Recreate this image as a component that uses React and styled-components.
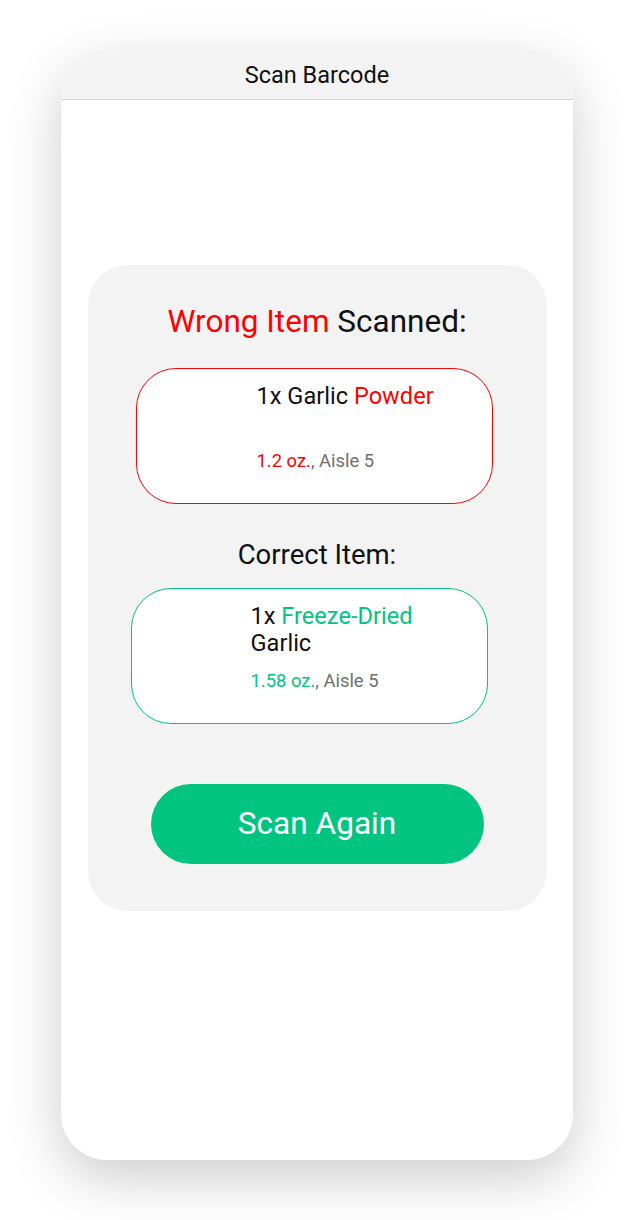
import React from "react";
import styled, { createGlobalStyle } from "styled-components";

const Global = createGlobalStyle`
  html, body { margin: 0; padding: 0; background: #ffffff; }
  body { font-family: Roboto, "Noto Sans", Arial, sans-serif; }
`;

const Page = styled.div`
  display: flex;
  justify-content: flex-start;
  padding: 50px 0 60px 61px;
`;

const Phone = styled.div`
  width: 512px;
  height: 1110px;
  background: #ffffff;
  border-radius: 46px;
  overflow: hidden;
  box-shadow: 0 18px 55px rgba(0, 0, 0, 0.2);
  display: flex;
  flex-direction: column;
  align-items: center;
`;

const Header = styled.div`
  align-self: stretch;
  height: 49px;
  background: #f3f3f3;
  border-bottom: 1px solid #d6d6d6;
  display: flex;
  align-items: center;
  justify-content: center;
  font-size: 23.5px;
  color: #111;
`;

const Panel = styled.div`
  margin-top: 165px;
  width: 459px;
  height: 646px;
  box-sizing: border-box;
  background: #f3f3f3;
  border-radius: 40px;
  display: flex;
  flex-direction: column;
  align-items: center;
  padding-top: 38px;
`;

const Heading = styled.div`
  font-size: ${(p) => p.$size}px;
  line-height: 1.2;
  color: #111;
  margin-top: ${(p) => p.$mt || 0}px;
  text-align: center;
`;

const Accent = styled.span`
  color: ${(p) => p.$color};
`;

const Card = styled.div`
  width: 357px;
  height: 136px;
  box-sizing: border-box;
  background: #fff;
  border: 1px solid ${(p) => p.$color};
  border-radius: 40px;
  margin-top: ${(p) => p.$mt}px;
  transform: translateX(${(p) => p.$shift}px);
  display: flex;
`;

const Thumb = styled.div`
  width: ${(p) => p.$w}px;
  flex-shrink: 0;
`;

const Info = styled.div`
  width: 200px;
  padding: 14px 0 32px;
  display: flex;
  flex-direction: column;
  justify-content: space-between;
`;

const Title = styled.div`
  font-size: 23.6px;
  line-height: 27px;
  color: #111;
`;

const Detail = styled.div`
  font-size: 18.4px;
  line-height: 20px;
  color: #707070;
`;

const Button = styled.button`
  margin-top: 60px;
  width: 333px;
  height: 80px;
  border: none;
  border-radius: 40px;
  background: #00c47f;
  color: #fff;
  font-family: Roboto, Arial, sans-serif;
  font-size: 31.6px;
  cursor: pointer;
`;

const RED = "#ff0000";
const GREEN = "#00c47f";

export default function App() {
  return (
    <>
      <Global />
      <Page>
        <Phone>
          <Header>Scan Barcode</Header>
          <Panel>
            <Heading $size={31.5}>
              <Accent $color={RED}>Wrong Item</Accent> Scanned:
            </Heading>
            <Card $color={RED} $mt={27} $shift={-3}>
              <Thumb $w={120} />
              <Info>
                <Title>
                  1x Garlic <Accent $color={RED}>Powder</Accent>
                </Title>
                <Detail>
                  <Accent $color={RED}>1.2 oz.</Accent>, Aisle 5
                </Detail>
              </Info>
            </Card>
            <Heading $size={27.5} $mt={34}>Correct Item:</Heading>
            <Card $color={GREEN} $mt={17} $shift={-8}>
              <Thumb $w={119} />
              <Info>
                <Title>
                  1x <Accent $color={GREEN}>Freeze-Dried</Accent> Garlic
                </Title>
                <Detail>
                  <Accent $color={GREEN}>1.58 oz.</Accent>, Aisle 5
                </Detail>
              </Info>
            </Card>
            <Button>Scan Again</Button>
          </Panel>
        </Phone>
      </Page>
    </>
  );
}
